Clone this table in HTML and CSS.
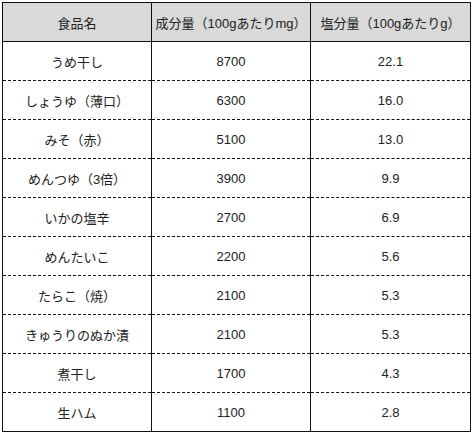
FILE: index.html
```html
<!DOCTYPE html>
<html lang="ja">
<head>
<meta charset="utf-8">
<link rel="stylesheet" href="styles.css">
</head>
<body>
<table class="salt">
<colgroup><col class="c1"><col class="c2"><col class="c3"></colgroup>
<thead>
<tr><th>食品名</th><th>成分量（100gあたりmg）</th><th>塩分量（100gあたりg）</th></tr>
</thead>
<tbody>
<tr><td>うめ干し</td><td>8700</td><td>22.1</td></tr>
<tr><td>しょうゆ（薄口）</td><td>6300</td><td>16.0</td></tr>
<tr><td>みそ（赤）</td><td>5100</td><td>13.0</td></tr>
<tr><td>めんつゆ（3倍）</td><td>3900</td><td>9.9</td></tr>
<tr><td>いかの塩辛</td><td>2700</td><td>6.9</td></tr>
<tr><td>めんたいこ</td><td>2200</td><td>5.6</td></tr>
<tr><td>たらこ（焼）</td><td>2100</td><td>5.3</td></tr>
<tr><td>きゅうりのぬか漬</td><td>2100</td><td>5.3</td></tr>
<tr><td>煮干し</td><td>1700</td><td>4.3</td></tr>
<tr><td>生ハム</td><td>1100</td><td>2.8</td></tr>
</tbody>
</table>
</body>
</html>
```
FILE: styles.css
```css
html, body { background: #fff; }
body {
  margin: 2px;
  font-family: "Liberation Sans", "Noto Sans CJK JP", sans-serif;
  color: #222;
}
.salt {
  border-collapse: collapse;
  width: 468px;
  table-layout: fixed;
  font-size: 13px;
}
.c1 { width: 149px; }
.c2 { width: 159px; }
.c3 { width: 160px; }
.salt th, .salt td {
  height: 38px;
  padding: 0;
  text-align: center;
  vertical-align: middle;
  border-left: 1px solid #111;
  border-right: 1px solid #111;
  border-bottom: 1px dashed #111;
  font-weight: normal;
}
.salt th {
  background: #d9d9d9;
  border-top: 1px solid #111;
  border-bottom: 1px solid #111;
}
.salt tbody tr:last-child td {
  border-bottom: 1px solid #111;
}
```
